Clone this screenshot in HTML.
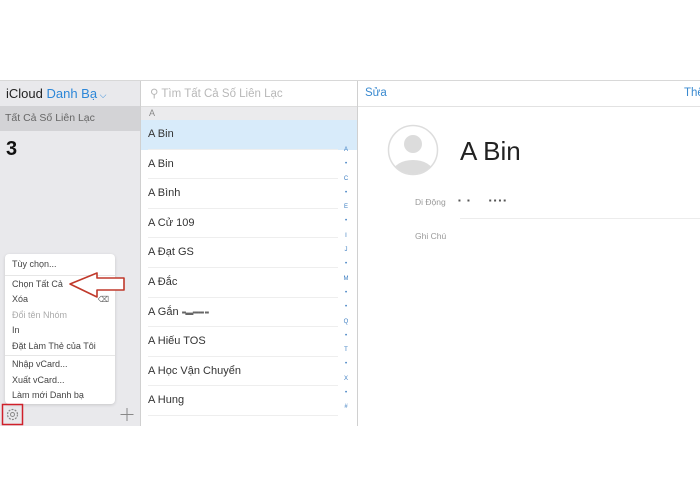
<!DOCTYPE html>
<html><head><meta charset="utf-8"><style>
*{margin:0;padding:0;box-sizing:border-box}
body{width:700px;height:502px;background:#fff;font-family:"Liberation Sans",sans-serif;position:relative;overflow:hidden;color:#333}
.a{position:absolute}
.r{height:29.6px;line-height:28.6px;border-bottom:1px solid #eee}
</style></head><body>
<div class="a" style="left:0;top:80px;width:700px;height:1px;background:#d8d8d8"></div>
<!-- sidebar -->
<div class="a" style="left:0;top:81px;width:140px;height:345px;background:#e9e9ec"></div>
<div class="a" style="left:6px;top:86px;font-size:13px;color:#222">iCloud <span style="color:#2d87d8">Danh Bạ</span><span style="color:#2d87d8;font-size:9px"> ⌵</span></div>
<div class="a" style="left:0;top:106px;width:140px;height:25px;background:#d3d3d6"></div>
<div class="a" style="left:5px;top:112px;font-size:10.5px;color:#666">Tất Cả Số Liên Lạc</div>
<div class="a" style="left:6px;top:138px;font-size:20px;font-weight:bold;color:#111">3</div>
<div class="a" style="left:5px;top:254px;width:110px;height:150px;background:#fff;border-radius:4px;box-shadow:0 1px 3px rgba(0,0,0,.15);font-size:9px;color:#444;line-height:15.5px;padding-top:3px">
<div style="padding-left:7px">Tùy chọn...</div>
<div style="height:1px;background:#e6e6e6;margin:2px 0 1px"></div>
<div style="padding-left:7px">Chọn Tất Cả</div>
<div style="padding-left:7px">Xóa<span style="float:right;margin-right:6px;font-size:8px;color:#666">⌫</span></div>
<div style="padding-left:7px;color:#aaa">Đổi tên Nhóm</div>
<div style="padding-left:7px">In</div>
<div style="padding-left:7px">Đặt Làm Thẻ của Tôi</div>
<div style="height:1px;background:#e6e6e6;margin:1px 0 1px"></div>
<div style="padding-left:7px">Nhập vCard...</div>
<div style="padding-left:7px">Xuất vCard...</div>
<div style="padding-left:7px">Làm mới Danh bạ</div>
</div>
<svg class="a" style="left:0;top:0" width="700" height="502">
<path d="M70 284 L97 273 L97 278 L124 278 L124 290 L97 290 L97 297 Z" fill="#fff" stroke="#c0392b" stroke-width="1.6" stroke-linejoin="round"/>
<rect x="2.5" y="404.5" width="20" height="20" fill="none" stroke="#d0202a" stroke-width="1.5"/>
<circle cx="12.5" cy="414.5" r="5" fill="none" stroke="#888" stroke-width="1.2" stroke-dasharray="2 1.2"/>
<circle cx="12.5" cy="414.5" r="2" fill="none" stroke="#888" stroke-width="1"/>
<path d="M127 408 V421 M120.5 414.5 H133.5" stroke="#888" stroke-width="1"/>
</svg>
<div class="a" style="left:140px;top:81px;width:1px;height:345px;background:#d0d0d0"></div>
<!-- list -->
<div class="a" style="left:150px;top:86px;font-size:11.5px;color:#b8b8b8">⚲ Tìm Tất Cả Số Liên Lạc</div>
<div class="a" style="left:141px;top:106px;width:216px;height:1px;background:#ddd"></div>
<div class="a" style="left:141px;top:107px;width:216px;height:13px;background:#ebebed;font-size:9px;color:#888;padding-left:8px;line-height:13px">A</div>
<div class="a" style="left:141px;top:120px;width:216px;height:30px;background:#d8ebfa"></div>
<div class="a" style="left:148px;top:120px;width:190px;font-size:11px;color:#333">
<div class="r">A Bin</div>
<div class="r">A Bin</div>
<div class="r">A Bình</div>
<div class="r">A Cử 109</div>
<div class="r">A Đạt GS</div>
<div class="r">A Đắc</div>
<div class="r">A Gắn <span style="letter-spacing:-1px;color:#666;font-size:8px">▪▪▬▪▪▪▪▪▪ ▪▪</span></div>
<div class="r">A Hiếu TOS</div>
<div class="r">A Học Vận Chuyển</div>
<div class="r">A Hung</div>
</div>
<div class="a" style="left:339px;top:143px;width:14px;text-align:center;font-size:6px;color:#3a7cc0;line-height:14.3px">A<br>•<br>C<br>•<br>E<br>•<br>I<br>J<br>•<br>M<br>•<br>•<br>Q<br>•<br>T<br>•<br>X<br>•<br>#</div>
<div class="a" style="left:357px;top:81px;width:1px;height:345px;background:#d0d0d0"></div>
<!-- detail -->
<div class="a" style="left:365px;top:87px;font-size:11.5px;color:#3a8ad0">Sửa</div>
<div class="a" style="left:684px;top:87px;font-size:11.5px;color:#3a8ad0">Thê</div>
<div class="a" style="left:358px;top:106px;width:342px;height:1px;background:#e2e2e2"></div>
<svg class="a" style="left:387px;top:124px" width="52" height="52"><defs><clipPath id="c"><circle cx="26" cy="26" r="24"/></clipPath></defs><circle cx="26" cy="26" r="24.5" fill="#fff" stroke="#ddd" stroke-width="1.5"/><g clip-path="url(#c)" fill="#dcdcdc"><circle cx="26" cy="20" r="9"/><ellipse cx="26" cy="48" rx="20" ry="12"/></g></svg>
<div class="a" style="left:460px;top:136px;font-size:26px;color:#222">A Bin</div>
<div class="a" style="left:415px;top:197px;font-size:8.5px;color:#999">Di Động</div>
<div class="a" style="left:458px;top:196px;font-size:8px;color:#555;letter-spacing:2px">▪ ▪ &nbsp;&nbsp; ▪▪▪▪</div>
<div class="a" style="left:460px;top:218px;width:240px;height:1px;background:#ececec"></div>
<div class="a" style="left:415px;top:231px;font-size:8.5px;color:#999">Ghi Chú</div>
</body></html>
